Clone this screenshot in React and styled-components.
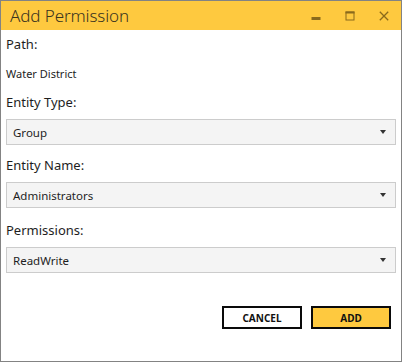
import React from "react";
import styled, { createGlobalStyle } from "styled-components";

const GlobalStyle = createGlobalStyle`
  html, body {
    margin: 0;
    padding: 0;
    background: #ffffff;
  }
  * {
    box-sizing: border-box;
  }
`;

const Window = styled.div`
  width: 402px;
  height: 362px;
  border: 1px solid #838383;
  background: #ffffff;
  display: flex;
  flex-direction: column;
  font-family: "Noto Sans", "Open Sans", sans-serif;
  color: #1e1e1e;
`;

const TitleBar = styled.div`
  height: 29px;
  background: #fec93f;
  display: flex;
  align-items: center;
  padding-left: 9px;
`;

const Title = styled.div`
  flex: 1;
  font-size: 17px;
  font-weight: 300;
  color: #3a3320;
  letter-spacing: -0.1px;
`;

const Controls = styled.div`
  display: flex;
  align-items: center;
  height: 100%;
`;

const ControlButton = styled.div`
  width: 34px;
  height: 100%;
  display: grid;
  place-items: center;
`;

const Body = styled.div`
  flex: 1;
  display: flex;
  flex-direction: column;
  padding: 0 5px 0 5px;
`;

const Label = styled.div`
  font-size: 13px;
  line-height: 18px;
  margin-top: ${(p) => p.$top}px;
`;

const Value = styled.div`
  font-size: 11px;
  line-height: 16px;
  margin-top: ${(p) => p.$top}px;
`;

const Select = styled.div`
  height: 26px;
  margin-top: 8px;
  border: 1px solid #cccccc;
  background: #f4f4f4;
  display: flex;
  align-items: center;
  justify-content: space-between;
  padding: 0 9px 0 6px;
  font-size: 11.5px;
`;

const Caret = styled.span`
  width: 0;
  height: 0;
  border-left: 3.5px solid transparent;
  border-right: 3.5px solid transparent;
  border-top: 4px solid #333333;
`;

const Footer = styled.div`
  display: flex;
  justify-content: flex-end;
  gap: 9px;
  margin-top: 33px;
  padding-right: 5px;
`;

const Button = styled.button`
  width: 80px;
  height: 23px;
  border: 2px solid #0a0a0a;
  background: ${(p) => (p.$primary ? "#fec93f" : "#ffffff")};
  font-family: "Noto Sans", "Open Sans", sans-serif;
  font-size: 10px;
  font-weight: 700;
  color: #111111;
  padding: 0;
  cursor: pointer;
`;

const iconColor = "#8a6a1c";

const App = () => {
  return (
    <>
      <GlobalStyle />
      <Window>
        <TitleBar>
          <Title>Add Permission</Title>
          <Controls>
            <ControlButton>
              <svg width="10" height="10" viewBox="0 0 10 10">
                <rect x="0.5" y="6" width="9" height="3" fill={iconColor} />
              </svg>
            </ControlButton>
            <ControlButton>
              <svg width="10" height="10" viewBox="0 0 10 10">
                <rect x="1" y="1" width="8" height="8" fill="none" stroke={iconColor} strokeWidth="1" />
                <rect x="0.5" y="0.5" width="9" height="2" fill={iconColor} />
              </svg>
            </ControlButton>
            <ControlButton>
              <svg width="10" height="10" viewBox="0 0 10 10">
                <path d="M0.8 0.8 L9.2 9.2 M9.2 0.8 L0.8 9.2" stroke={iconColor} strokeWidth="1.3" />
              </svg>
            </ControlButton>
          </Controls>
        </TitleBar>
        <Body>
          <Label $top={5}>Path:</Label>
          <Value $top={13}>Water District</Value>
          <Label $top={11}>Entity Type:</Label>
          <Select>
            <span>Group</span>
            <Caret />
          </Select>
          <Label $top={11}>Entity Name:</Label>
          <Select>
            <span>Administrators</span>
            <Caret />
          </Select>
          <Label $top={13}>Permissions:</Label>
          <Select>
            <span>ReadWrite</span>
            <Caret />
          </Select>
          <Footer>
            <Button>CANCEL</Button>
            <Button $primary>ADD</Button>
          </Footer>
        </Body>
      </Window>
    </>
  );
};

export default App;
